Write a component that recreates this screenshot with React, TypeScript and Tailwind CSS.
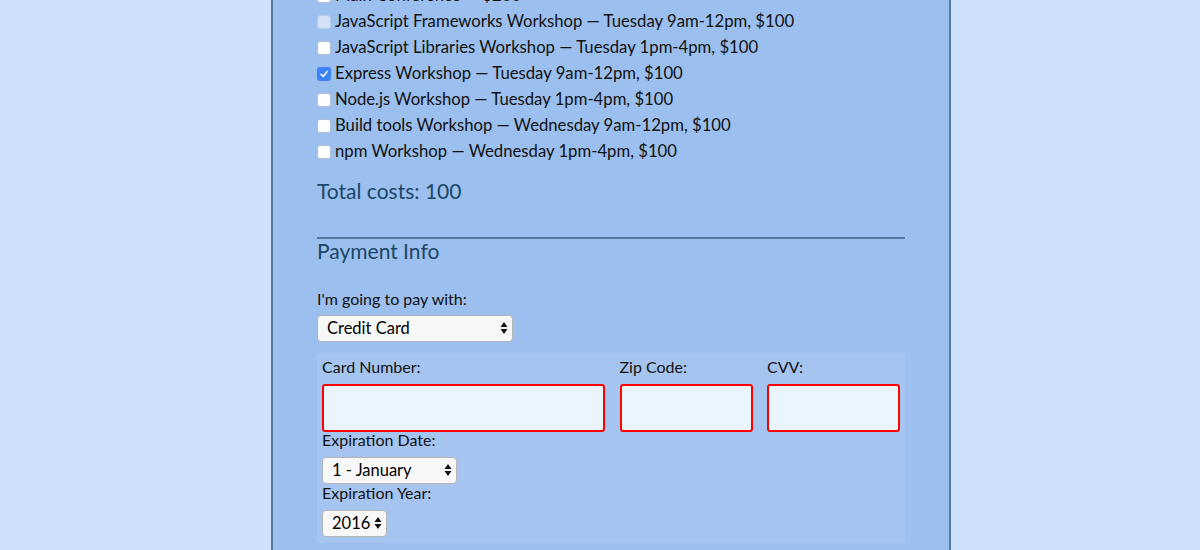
import React from 'react';

const workshops = [
  { text: 'Main Conference — $200', checked: false, disabled: false },
  { text: 'JavaScript Frameworks Workshop — Tuesday 9am-12pm, $100', checked: false, disabled: true },
  { text: 'JavaScript Libraries Workshop — Tuesday 1pm-4pm, $100', checked: false, disabled: false },
  { text: 'Express Workshop — Tuesday 9am-12pm, $100', checked: true, disabled: false },
  { text: 'Node.js Workshop — Tuesday 1pm-4pm, $100', checked: false, disabled: false },
  { text: 'Build tools Workshop — Wednesday 9am-12pm, $100', checked: false, disabled: false },
  { text: 'npm Workshop — Wednesday 1pm-4pm, $100', checked: false, disabled: false },
];

function Box({ checked, disabled }: { checked: boolean; disabled: boolean }) {
  if (checked) {
    return (
      <span className="flex h-[14px] w-[14px] shrink-0 items-center justify-center rounded-[3px] bg-[#3b82f6]">
        <svg width="10" height="10" viewBox="0 0 10 10" fill="none">
          <path d="M2 5.2 4.2 7.4 8.2 2.6" stroke="white" strokeWidth="1.5" strokeLinecap="round" strokeLinejoin="round" />
        </svg>
      </span>
    );
  }
  return (
    <span
      className={
        disabled
          ? 'h-[14px] w-[14px] shrink-0 rounded-[3px] border border-[#b9cbe6] bg-[#d3e2f8]'
          : 'h-[14px] w-[14px] shrink-0 rounded-[3px] border border-[#aebfd6] bg-white'
      }
    />
  );
}

function Arrows() {
  return (
    <svg className="pointer-events-none absolute right-[5px] top-1/2 -translate-y-1/2" width="8" height="14" viewBox="0 0 8 14">
      <path d="M4 1 7.5 6H0.5Z" fill="#111" />
      <path d="M4 13 0.5 8H7.5Z" fill="#111" />
    </svg>
  );
}

function Select({ value, width }: { value: string; width: string }) {
  return (
    <div className={`relative h-[27px] ${width}`}>
      <div className="flex h-full w-full items-center rounded-[4px] border border-[#b4b4b4] bg-[#f8f8f8] pl-[9px] text-[16.5px] text-black">
        {value}
      </div>
      <Arrows />
    </div>
  );
}

export default function App() {
  return (
    <div className="flex h-[550px] w-full justify-center overflow-hidden bg-[#cfe0fb] pl-[22px] font-['Lato',sans-serif]">
      <div className="w-[680px] shrink-0 border-x-2 border-[#56799f] bg-[#9bbfee] px-[44px]">
        <div className="-mt-[17px] flex flex-col">
          {workshops.map((w) => (
            <label key={w.text} className="flex h-[26px] items-center gap-[4px] text-[16.7px] text-[#111]">
              <Box checked={w.checked} disabled={w.disabled} />
              <span>{w.text}</span>
            </label>
          ))}
        </div>

        <p className="mt-[10px] text-[21px] text-[#1b4766]">Total costs: 100</p>

        <div className="mt-[30px] h-[2px] bg-[#4f779f]" />
        <h2 className="text-[21px] leading-[24px] text-[#1b4766]">Payment Info</h2>

        <p className="mt-[24px] text-[16px] leading-[24px] text-[#111]">I'm going to pay with:</p>
        <div className="mt-[4px]">
          <Select value="Credit Card" width="w-[196px]" />
        </div>

        <div className="mt-[11px] rounded-[3px] bg-[#a5c5f0] px-[5px] pb-[6px] text-[16px] text-[#111]">
          <div className="grid grid-cols-[283px_133px_133px] gap-x-[14.5px]">
            <div>
              <p className="h-[27px] leading-[27px]">Card Number:</p>
              <div className="mt-[4px] h-[48px] rounded-[3px] border-2 border-[#ff0000] bg-[#ebf5fd]" />
            </div>
            <div>
              <p className="h-[27px] leading-[27px]">Zip Code:</p>
              <div className="mt-[4px] h-[48px] rounded-[3px] border-2 border-[#ff0000] bg-[#ebf5fd]" />
            </div>
            <div>
              <p className="h-[27px] leading-[27px]">CVV:</p>
              <div className="mt-[4px] h-[48px] rounded-[3px] border-2 border-[#ff0000] bg-[#ebf5fd]" />
            </div>
          </div>
          <p className="mb-[9px] leading-[16px]">Expiration Date:</p>
          <Select value="1 - January" width="w-[135px]" />
          <p className="mb-[8px] leading-[18px]">Expiration Year:</p>
          <Select value="2016" width="w-[65px]" />
        </div>
      </div>
    </div>
  );
}
